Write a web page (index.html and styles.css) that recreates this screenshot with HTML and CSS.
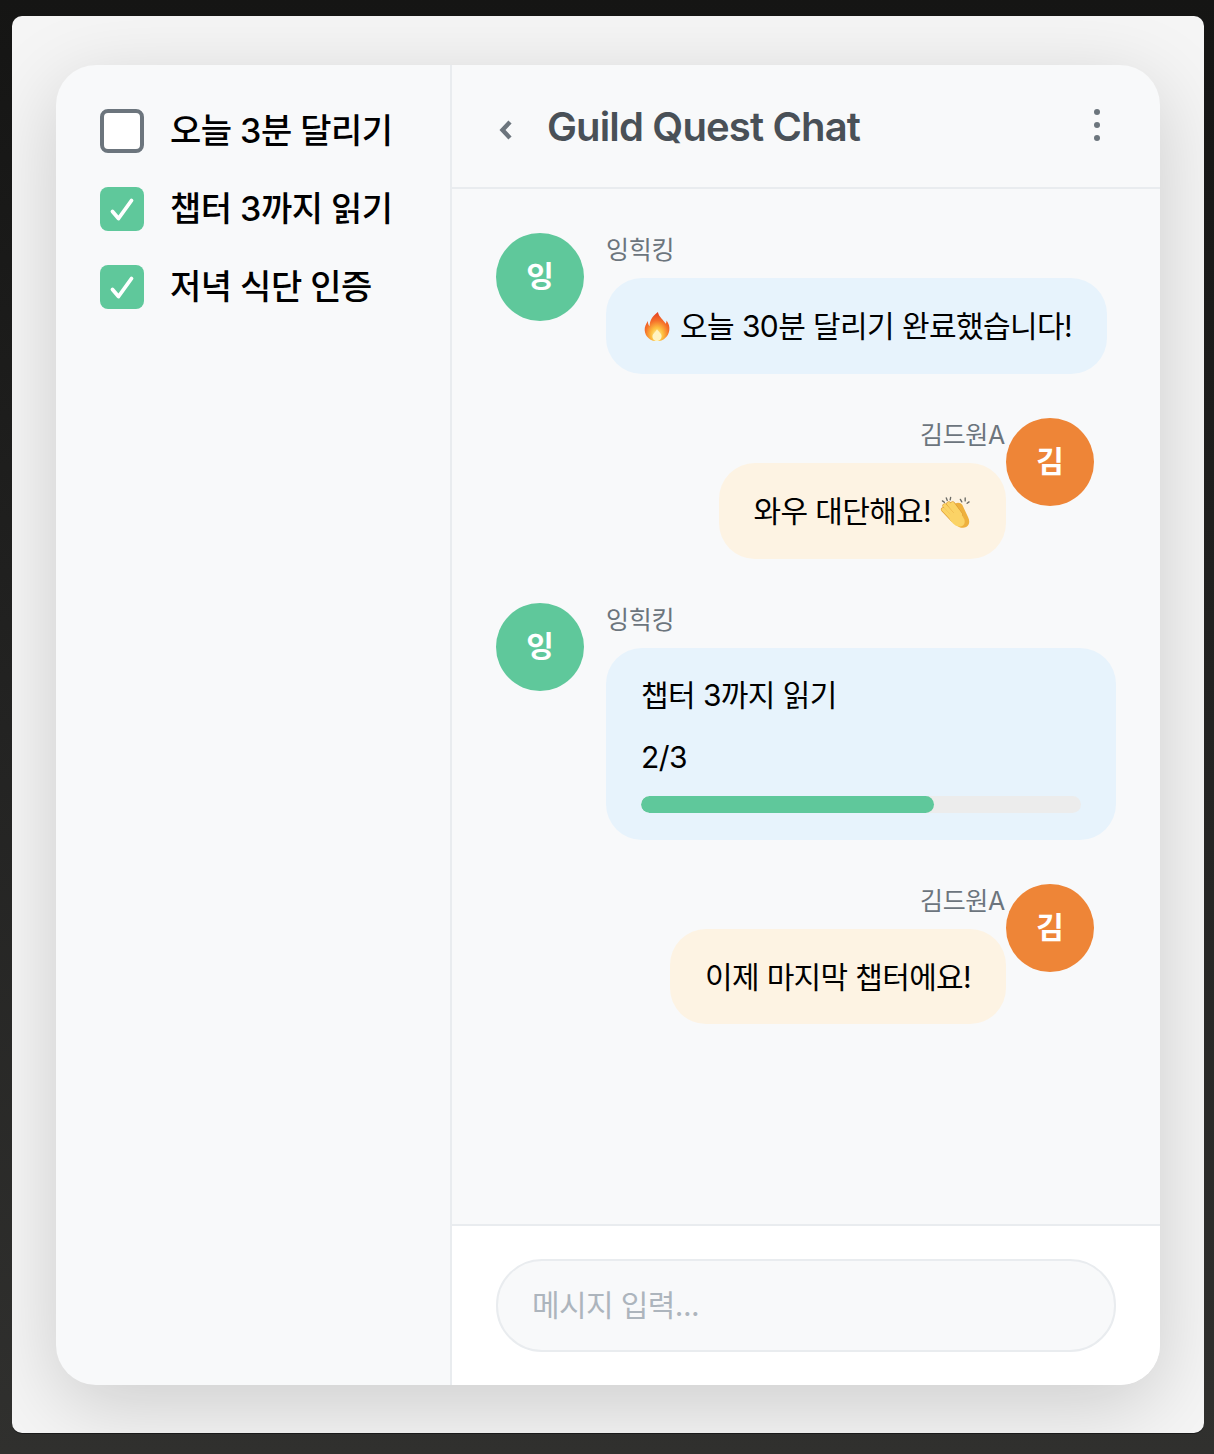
FILE: index.html
```html
<!DOCTYPE html>
<html lang="ko">
<head>
<meta charset="utf-8">
<title>Guild Quest Chat</title>
<link rel="stylesheet" href="styles.css">
</head>
<body>
<div class="window">
  <div class="card">
    <aside class="sidebar">
      <div class="quest">
        <span class="box"></span>
        <span class="quest-label">오늘 3분 달리기</span>
      </div>
      <div class="quest">
        <span class="box box-done"><svg viewBox="0 0 44 44" class="tick"><path d="M12.500 24.500 L18.500 31.500 L31.500 13.500"/></svg></span>
        <span class="quest-label">챕터 3까지 읽기</span>
      </div>
      <div class="quest">
        <span class="box box-done"><svg viewBox="0 0 44 44" class="tick"><path d="M12.500 24.500 L18.500 31.500 L31.500 13.500"/></svg></span>
        <span class="quest-label">저녁 식단 인증</span>
      </div>
    </aside>
    <main class="chat">
      <header class="chat-head">
        <svg class="back" viewBox="0 0 16 28"><path d="M14 8 L6.500 16 L14 24"/></svg>
        <h1 class="title">Guild Quest Chat</h1>
        <div class="kebab"><i></i><i></i><i></i></div>
      </header>
      <section class="messages">
        <article class="msg">
          <div class="avatar avatar-green">잉</div>
          <div class="body">
            <div class="name">잉힉킹</div>
            <div class="bubble bubble-blue">
              <svg class="emoji emoji-fire" viewBox="0 0 30 34">
                <defs>
                  <radialGradient id="flame" cx="50%" cy="78%" r="78%">
                    <stop offset="0" stop-color="#fff0a0"/>
                    <stop offset=".3" stop-color="#fdc040"/>
                    <stop offset=".62" stop-color="#f5702a"/>
                    <stop offset="1" stop-color="#e23c22"/>
                  </radialGradient>
                </defs>
                <path fill="url(#flame)" d="M16 1 C17 6.500 22 9.500 24.500 14 C25.200 12.800 25.500 11.800 25.500 10.500 C28 14 29 17.500 28.500 21 C27.600 28 22 33 15 33 C7.500 33 2 28 1.500 21 C1.200 17.500 3 14 5 11 C5 13.500 5.500 15.500 7 16.500 C6.800 10 10.500 5 16 1 Z"/>
                <path fill="#fff3c0" d="M15 20 C17 23 20 24.500 20 27.500 C20 30.500 18 33 15 33 C12 33 10 30.500 10 28 C10 24.500 13.500 23.500 15 20 Z"/>
              </svg>
              <span>오늘 30분 달리기 완료했습니다!</span>
            </div>
          </div>
        </article>
        <article class="msg msg-own">
          <div class="body">
            <div class="name">김드원A</div>
            <div class="bubble bubble-cream">
              <span>와우 대단해요!</span>
              <svg class="emoji emoji-clap" viewBox="0 0 32 34">
                <path fill="#eeb03e" d="M13 10 C16 6 21 6 23 9 L29 22 C31 26 30.500 30 27 32 C23 34 19 32 16 29 Z"/>
                <g class="clap-lines">
                  <path d="M5 10 L15 21"/>
                  <path d="M3.500 14 L13 24"/>
                  <path d="M9 8 L18 19"/>
                  <path d="M13 8 L21 19"/>
                </g>
                <g class="clap-fingers">
                  <path d="M5 10 L15 21"/>
                  <path d="M3.500 14 L13 24"/>
                  <path d="M9 8 L18 19"/>
                  <path d="M13 8 L21 19"/>
                </g>
                <path fill="#fbd366" d="M10 19 L20 15 L25 24 C26.500 28 24.500 31 21 31.500 C17 32 13 29 10 24 Z"/>
                <path fill="none" stroke="#6b6b66" stroke-width="1.400" stroke-linecap="round" d="M2.500 5 L4.500 6.500 M6.500 2 L7.500 4.500 M11 1.500 L10.500 4 M21 3.500 L22.500 6 M26 2 L26 5 M30 6 L28 7.500"/>
              </svg>
            </div>
          </div>
          <div class="avatar avatar-orange">김</div>
        </article>
        <article class="msg">
          <div class="avatar avatar-green">잉</div>
          <div class="body">
            <div class="name">잉힉킹</div>
            <div class="bubble bubble-blue bubble-progress">
              <div class="progress-title">챕터 3까지 읽기</div>
              <div class="progress-count">2/3</div>
              <div class="track"><div class="fill" style="width:66.6%"></div></div>
            </div>
          </div>
        </article>
        <article class="msg msg-own">
          <div class="body">
            <div class="name">김드원A</div>
            <div class="bubble bubble-cream bubble-short"><span>이제 마지막 챕터에요!</span></div>
          </div>
          <div class="avatar avatar-orange">김</div>
        </article>
      </section>
      <footer class="composer">
        <input class="field" type="text" placeholder="메시지 입력...">
      </footer>
    </main>
  </div>
</div>
</body>
</html>
```
FILE: styles.css
```css
* { box-sizing: border-box; }
html, body { margin: 0; height: 100%; }
body {
  width: 1214px;
  height: 1454px;
  overflow: hidden;
  padding: 16px 10px 21px 12px;
  background: linear-gradient(180deg, #151514 0%, #232322 50%, #30302e 100%);
  font-family: Inter, "Noto Sans CJK KR", sans-serif;
  color: #000;
}
.window {
  height: 1417px;
  padding: 49px 44px 48px;
  border-radius: 10px;
  background: #f5f5f5;
  overflow: hidden;
  box-shadow: 0 1px 0 #1a1a1a;
}
.card {
  display: flex;
  height: 1320px;
  border-radius: 40px;
  background: #f8f9fa;
  overflow: hidden;
  box-shadow: 0 20px 80px rgba(0, 0, 0, .17);
}
.sidebar {
  flex: 0 0 396px;
  padding: 44px;
  display: flex;
  flex-direction: column;
  gap: 34px;
  border-right: 2px solid #e9ecef;
}
.quest { display: flex; align-items: center; gap: 26px; height: 44px; }
.box {
  width: 44px;
  height: 44px;
  flex: none;
  border: 4px solid #6c757d;
  border-radius: 8px;
  background: #fff;
}
.box-done { border: 0; background: #5fc89b; }
.tick { display: block; width: 44px; height: 44px; }
.tick path { fill: none; stroke: #fff; stroke-width: 3.8; stroke-linecap: round; stroke-linejoin: round; }
.quest-label { font-size: 34px; font-weight: 500; line-height: 44px; letter-spacing: -.5px; }

.chat { flex: 1; min-width: 0; display: flex; flex-direction: column; }
.chat-head {
  height: 124px;
  flex: none;
  display: flex;
  align-items: center;
  padding: 0 44px;
  border-bottom: 2px solid #e9ecef;
}
.back { width: 16px; height: 28px; margin-top: 4px; flex: none; }
.back path { fill: none; stroke: #6c757d; stroke-width: 4.4; }
.title { margin: 2px 0 0 35px; font-size: 40px; font-weight: 600; letter-spacing: -.85px; color: #495057; line-height: 48px; flex: 1; }
.kebab { display: flex; flex-direction: column; gap: 7px; margin-right: 16px; margin-top: -2px; }
.kebab i { display: block; width: 6px; height: 6px; border-radius: 50%; background: #6c757d; }

.messages {
  flex: 1;
  min-height: 0;
  padding: 44px;
  display: flex;
  flex-direction: column;
  gap: 44px;
}
.msg { display: flex; align-items: flex-start; gap: 22px; }
.msg-own { justify-content: flex-end; gap: 0; padding-right: 22px; }
.avatar {
  width: 88px;
  height: 88px;
  flex: none;
  border-radius: 50%;
  display: flex;
  align-items: center;
  justify-content: center;
  color: #fff;
  font-size: 30px;
  font-weight: 700;
  padding-bottom: 6px;
}
.avatar-green { background: #5fc89b; }
.avatar-orange { background: #ee8537; }
.body { display: flex; flex-direction: column; align-items: flex-start; }
.msg-own .body { align-items: flex-end; }
.name { font-size: 25px; line-height: 33px; height: 45px; padding-top: 1px; color: #6c757d; letter-spacing: -.3px; }
.msg-own .name { padding-right: 1px; }
.bubble {
  display: flex;
  align-items: center;
  gap: 9px;
  font-size: 30px;
  line-height: 40px;
  padding: 28px 35px;
  border-radius: 36px;
  letter-spacing: -.58px;
}
.bubble-blue { background: #e7f3fc; }
.bubble-cream { background: #fdf3e3; letter-spacing: -.66px; }
.bubble-short { padding-bottom: 27px; }
.emoji { flex: none; }
.emoji-fire { width: 28px; height: 31px; margin-left: 2px; }
.emoji-clap { width: 31px; height: 33px; margin-top: 2px; }
.clap-lines path { fill: none; stroke: #dc9a33; stroke-width: 5; stroke-linecap: round; }
.clap-fingers path { fill: none; stroke: #fbd366; stroke-width: 3.8; stroke-linecap: round; }
.bubble-progress {
  display: block;
  width: 510px;
  padding: 27px 35px;
}
.progress-title { height: 62px; }
.progress-count { height: 59px; }
.track { height: 17px; border-radius: 9px; background: #ececec; overflow: hidden; }
.fill { height: 100%; border-radius: 9px; background: #5fc89b; }

.composer {
  flex: none;
  height: 161px;
  padding: 33px 44px;
  background: #fff;
  border-top: 2px solid #e9ecef;
}
.field {
  display: block;
  width: 100%;
  height: 93px;
  padding: 0 34px 2px;
  border: 2px solid #e9ecef;
  border-radius: 46px;
  background: #f8f9fa;
  font: inherit;
  font-size: 30px;
  letter-spacing: -.6px;
  outline: none;
}
.field::placeholder { color: #adb5bd; opacity: 1; }
```
